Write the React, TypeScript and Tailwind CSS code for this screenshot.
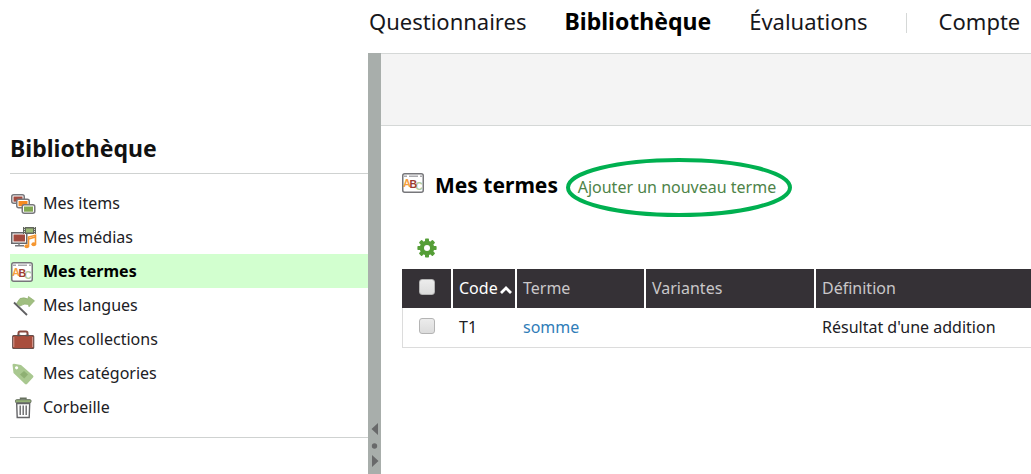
import type { ReactNode } from "react";

function TermsIcon() {
  return (
    <svg width="22" height="20" viewBox="0 0 22 20" aria-hidden="true">
      <rect x="0.75" y="0.75" width="20.5" height="18.5" rx="2" fill="#fff" stroke="#77777b" strokeWidth="1.5" />
      <path d="M2 3.2h3M7 3.2h9M18 3.2h2" stroke="#aaaaae" strokeWidth="1.4" />
      <g fontFamily="Liberation Sans, Arial, sans-serif" fontWeight="700">
        <text x="1" y="13.5" fontSize="11" fill="#f6a140">A</text>
        <text x="13.3" y="17" fontSize="10.5" fill="#b3cda0">C</text>
        <text x="7.5" y="15" fontSize="10.5" fill="#9d3d32">B</text>
      </g>
    </svg>
  );
}

function Card({ x, y, color }: { x: number; y: number; color: string }) {
  return (
    <g>
      <rect x={x + 0.75} y={y + 0.75} width="12.5" height="8.5" rx="2" fill="#fff" stroke="#77777b" strokeWidth="1.5" />
      <rect x={x + 2.5} y={y + 2.5} width="9" height="5.2" fill={color} />
    </g>
  );
}

function ItemsIcon() {
  return (
    <svg width="26" height="20" viewBox="0 0 26 20" aria-hidden="true">
      <Card x={0} y={0} color="#a34a3e" />
      <Card x={5} y={4.5} color="#f58a22" />
      <Card x={10.5} y={10} color="#82a852" />
    </svg>
  );
}

function MediaIcon() {
  return (
    <svg width="26" height="22" viewBox="0 0 26 22" aria-hidden="true">
      <rect x="0.75" y="5.75" width="15" height="10.5" fill="#fff" stroke="#68686b" strokeWidth="1.5" />
      <rect x="2.5" y="7.5" width="11.5" height="7" fill="#a34a3e" />
      <path d="M8 16v2.5M4 18.7h9" stroke="#77777b" strokeWidth="1.4" />
      <rect x="12" y="0" width="13" height="7" fill="#62665d" />
      <rect x="15" y="1.5" width="7" height="4" fill="#9bbb76" />
      <path d="M13.5 0v7M23.5 0v7" stroke="#d5d8d1" strokeWidth="1" strokeDasharray="1 1" />
      <path d="M17.5 19v-9l7-1.8V17" fill="none" stroke="#f59630" strokeWidth="1.6" />
      <path d="M17.5 12l7-2" stroke="#f59630" strokeWidth="1.6" />
      <ellipse cx="15.8" cy="19.2" rx="2.4" ry="2" fill="#f59630" />
      <ellipse cx="22.8" cy="17.2" rx="2.4" ry="2" fill="#f59630" />
    </svg>
  );
}

function FlagIcon() {
  return (
    <svg width="26" height="22" viewBox="0 0 26 22" aria-hidden="true">
      <path
        d="M5.5 8.5L9 3.5q4-1.5 8 .5l.5-2.5 6 4.3-5.500 6-.5-2.300q-4-1.500-8.500 1.500z"
        fill="#a0bf80"
        stroke="#8cac6c"
        strokeWidth="0.7"
      />
      <path d="M3 7.5L16 20" stroke="#606062" strokeWidth="1.8" />
    </svg>
  );
}

function CaseIcon() {
  return (
    <svg width="26" height="20" viewBox="0 0 26 20" aria-hidden="true">
      <path d="M7.5 5.5V3.2Q7.5 1.5 9 1.5h6Q16.5 1.5 16.5 3.2V5.5" fill="none" stroke="#8a4a40" strokeWidth="2" />
      <rect x="1.7" y="5.5" width="21" height="13" rx="1" fill="#a94e3d" stroke="#66504c" strokeWidth="1.2" />
      <path d="M2.8 7v10M21.6 7v10" stroke="#d69a90" strokeWidth="1" />
      <path d="M6 5.5h3.500M14.5 5.5H18" stroke="#555" strokeWidth="1.6" />
    </svg>
  );
}

function TagIcon() {
  return (
    <svg width="26" height="22" viewBox="0 0 26 22" aria-hidden="true">
      <path
        fillRule="evenodd"
        d="M1.5 2Q1.5 .7 3 .7L10 2 22 12.500q1 1 0 2l-6 6.500q-1 .8-2 0L2.5 10zM5.6 3.2a1.6 1.6 0 1 0 .01 0z"
        fill="#a9c890"
      />
      <path d="M9 11.5L13 8l4 3.500-3.800 4z" fill="#8eb073" />
    </svg>
  );
}

function TrashIcon() {
  return (
    <svg width="26" height="22" viewBox="0 0 26 22" aria-hidden="true">
      <path d="M9.5 2.500V1.200h5.500v1.300" fill="none" stroke="#66705e" strokeWidth="1.4" />
      <rect x="4.500" y="2.700" width="15.500" height="3" rx="1" fill="#93b077" stroke="#66705e" strokeWidth="1" />
      <path d="M5.700 6.500h13l-.5 14H6.200z" fill="#fff" stroke="#646467" strokeWidth="1.4" />
      <path d="M9.200 8.500v9.500M12.200 8.500v9.500M15.200 8.500v9.500" stroke="#68686b" strokeWidth="1.4" />
    </svg>
  );
}

function GearIcon() {
  return (
    <svg width="20" height="20" viewBox="-10 -10 20 20" aria-hidden="true">
      <g fill="#559e37">
        <circle r="7.3" />
        {[0, 45, 90, 135, 180, 225, 270, 315].map((angle) => (
          <rect key={angle} x="-2" y="-9.6" width="4" height="5" rx="0.8" transform={`rotate(${angle})`} />
        ))}
      </g>
      <circle r="3" fill="#fff" />
    </svg>
  );
}

function NavLink({ children, active }: { children: ReactNode; active?: boolean }) {
  return (
    <a
      href="#"
      aria-current={active ? "page" : undefined}
      className={active ? "text-[23px] font-bold text-black" : "text-[#17171b]"}
    >
      {children}
    </a>
  );
}

const library = [
  { label: "Mes items", icon: <ItemsIcon /> },
  { label: "Mes médias", icon: <MediaIcon /> },
  { label: "Mes termes", icon: <TermsIcon />, active: true },
  { label: "Mes langues", icon: <FlagIcon /> },
  { label: "Mes collections", icon: <CaseIcon /> },
  { label: "Mes catégories", icon: <TagIcon /> },
  { label: "Corbeille", icon: <TrashIcon /> },
];

const checkbox =
  "block size-4 appearance-none rounded-[3px] border border-[#b4b4b4] bg-linear-to-b from-[#ececec] to-[#dcdcdc] checked:bg-[#559e37]";
const headCell = "border-l-2 border-white pb-0.5 pl-1.5 font-normal";
const bodyCell = "border-b border-[#dcdcdc] pb-0.5 pl-2";

export default function App() {
  return (
    <div className="flex min-h-screen flex-col overflow-x-hidden bg-white font-['Noto_Sans','Open_Sans',sans-serif] text-base text-[#202024]">
      <header className="flex h-[53px] shrink-0 pl-[369px]">
        <nav className="flex h-[42px] items-center gap-[38px] whitespace-nowrap text-[22px]">
          <NavLink>Questionnaires</NavLink>
          <NavLink active>Bibliothèque</NavLink>
          <NavLink>Évaluations</NavLink>
          <div className="flex items-center gap-8">
            <span className="mt-1 h-5 w-px bg-[#d5d8d7]" />
            <NavLink>Compte</NavLink>
          </div>
        </nav>
      </header>
      <div className="flex flex-1">
        <aside className="w-[368px] shrink-0 pt-[79px] pl-2.5">
          <h2 className="h-[42px] border-b border-[#cfd2d1] text-[23px] leading-8 font-bold text-[#111]">Bibliothèque</h2>
          <ul className="border-b border-[#cfd2d1] pt-3 pb-[13px]">
            {library.map((item) => (
              <li key={item.label}>
                <a
                  href="#"
                  className={
                    item.active
                      ? "flex h-[34px] items-center bg-[#d2ffcf] font-bold text-black"
                      : "flex h-[34px] items-center"
                  }
                >
                  <span className="flex w-[33px] shrink-0 pt-0.5 pl-px">{item.icon}</span>
                  {item.label}
                </a>
              </li>
            ))}
          </ul>
        </aside>
        <div className="flex w-[13px] shrink-0 flex-col items-center justify-end bg-[#a8aeab] pb-1.5">
          <svg width="9" height="46" viewBox="0 0 9 46" fill="#68696a" aria-hidden="true">
            <path d="M8 1v12L1.5 7zM2 33v12l6.5-6z" />
            <circle cx="4.5" cy="24" r="2.7" />
          </svg>
        </div>
        <main className="min-w-0 flex-1">
          <div className="h-[73px] border-y border-[#d5d8d7] bg-[#f4f4f4]" />
          <div className="pt-8 pl-[21px]">
            <div className="flex h-[59px] items-center whitespace-nowrap">
              <span className="pb-2.5">
                <TermsIcon />
              </span>
              <h1 className="ml-[11px] pb-1.5 text-[21px] leading-8 font-bold text-black">Mes termes</h1>
              <div className="relative ml-2 flex h-[59px] w-[226px] items-center justify-center pr-1 pb-0.5">
                <svg className="absolute inset-0 size-full" viewBox="0 0 226 59" aria-hidden="true">
                  <ellipse cx="113" cy="29.5" rx="111" ry="27.5" fill="none" stroke="#00b050" strokeWidth="4" />
                </svg>
                <a href="#" className="relative text-[#4e8348]">Ajouter un nouveau terme</a>
              </div>
            </div>
            <button type="button" aria-label="Options" className="mt-[21px] ml-[15px] block">
              <GearIcon />
            </button>
            <table className="mt-[11px] w-full table-fixed border-separate border-spacing-0 text-left">
              <thead className="h-[39px] bg-[#353136] text-[#c9c7c9]">
                <tr>
                  <th className="w-[49px] pb-1">
                    <input type="checkbox" aria-label="Tout sélectionner" className={`${checkbox} mx-auto`} />
                  </th>
                  <th aria-sort="ascending" className={`w-16 text-white ${headCell}`}>
                    <button type="button" className="flex items-center">
                      Code
                      <svg width="14" height="10" viewBox="0 0 14 10" className="ml-px mt-1 shrink-0" aria-hidden="true">
                        <path d="M2 8l5-5 5 5" fill="none" stroke="#fff" strokeWidth="2.8" />
                      </svg>
                    </button>
                  </th>
                  <th className={`w-[129px] ${headCell}`}>Terme</th>
                  <th className={`w-[170px] ${headCell}`}>Variantes</th>
                  <th className={headCell}>Définition</th>
                </tr>
              </thead>
              <tbody>
                <tr className="h-10">
                  <td className="border-b border-l border-[#dcdcdc] pb-1">
                    <input type="checkbox" aria-label="Sélectionner somme" className={`${checkbox} mx-auto`} />
                  </td>
                  <td className={bodyCell}>T1</td>
                  <td className={bodyCell}>
                    <a href="#" className="text-[#2f7db8]">somme</a>
                  </td>
                  <td className={bodyCell} />
                  <td className={bodyCell}>Résultat d'une addition</td>
                </tr>
              </tbody>
            </table>
          </div>
        </main>
      </div>
    </div>
  );
}
